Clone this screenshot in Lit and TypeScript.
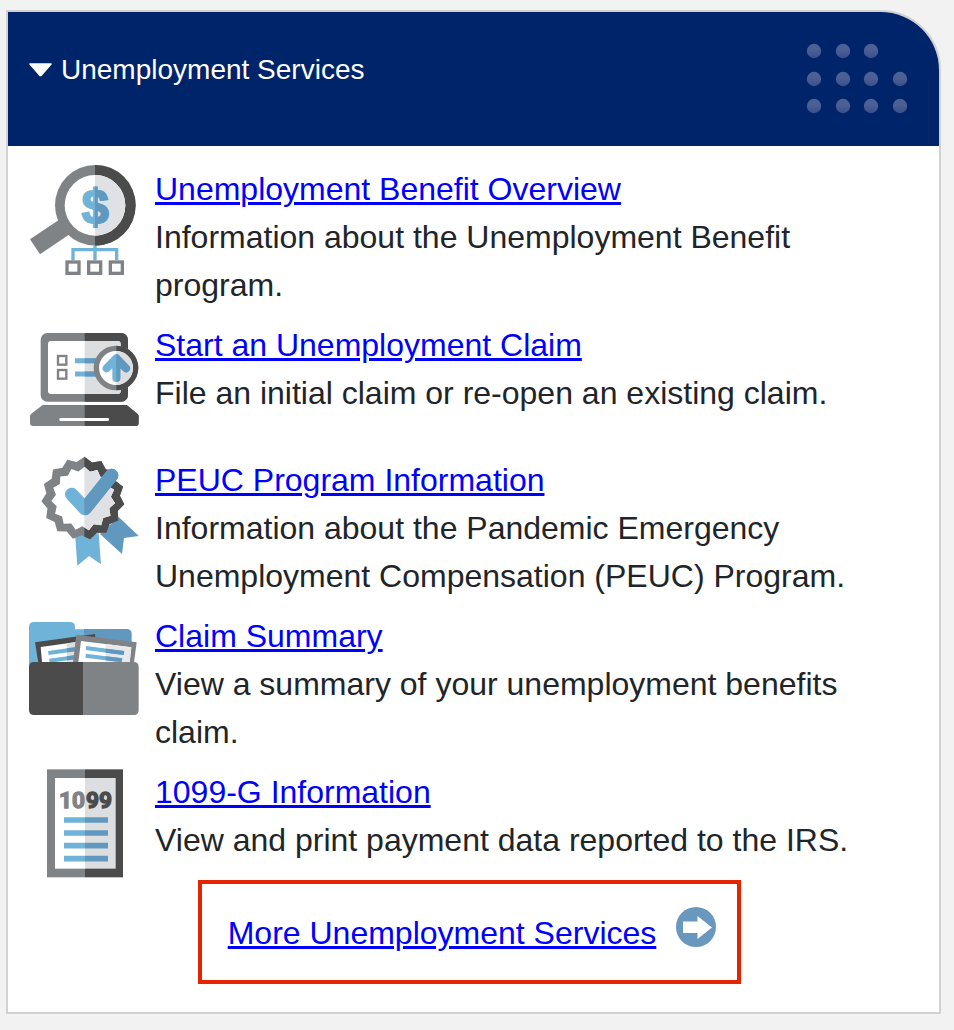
import { LitElement, html, css, svg, nothing } from "lit";
import { customElement, property, state } from "lit/decorators.js";

const star = (cx: number, cy: number, outer: number, inner: number, tips: number, start: number) =>
  Array.from({ length: tips * 2 }, (_, i) => {
    const r = i % 2 ? inner : outer;
    const a = ((start + (i * 180) / tips) * Math.PI) / 180;
    return `${(cx + r * Math.cos(a)).toFixed(1)},${(cy + r * Math.sin(a)).toFixed(1)}`;
  }).join(" ");

const icons: Record<string, { box: string; height: number; art: unknown }> = {
  overview: {
    box: "27 30 330 330",
    height: 110,
    art: svg`
      <defs><clipPath id="right"><rect x="225" y="20" width="140" height="350"/></clipPath></defs>
      <path d="M30 253L122 191L150 237L60 298Z" fill="#808386"/>
      <circle cx="226" cy="151" r="121" fill="#808386"/>
      <circle cx="226" cy="151" r="121" fill="#4b4b4b" clip-path="url(#right)"/>
      <circle cx="225" cy="151" r="91" fill="#fff"/>
      <circle cx="225" cy="151" r="91" fill="#dfe1e4" clip-path="url(#right)"/>
      <text x="225" y="204" class="dollar" fill="#70b3d8" stroke="#70b3d8">$</text>
      <text x="225" y="204" class="dollar" fill="#6098bf" stroke="#6098bf" clip-path="url(#right)">$</text>
      <path d="M159 316V284H290V316M225 272V316" fill="none" stroke="#70b3d8" stroke-width="10"/>
      <g fill="#fff" stroke="#808386" stroke-width="10">
        <rect x="141" y="321" width="36" height="34"/>
        <rect x="206" y="321" width="36" height="34"/>
        <rect x="271" y="321" width="36" height="34"/>
      </g>`,
  },
  claim: {
    box: "27 3 330 369",
    height: 123,
    art: svg`
      <defs>
        <clipPath id="right"><rect x="194" y="0" width="170" height="372"/></clipPath>
        <clipPath id="lens"><rect x="289" y="0" width="80" height="372"/></clipPath>
      </defs>
      <g fill="#808386">
        <rect x="62" y="39" width="262" height="206" rx="20"/>
        <path d="M68 255H320L353 282Q356 285 356 289V309Q356 318 347 318H39Q30 318 30 309V289Q30 285 33 282Z"/>
      </g>
      <g fill="#4b4b4b" clip-path="url(#right)">
        <rect x="62" y="39" width="262" height="206" rx="20"/>
        <path d="M68 255H320L353 282Q356 285 356 289V309Q356 318 347 318H39Q30 318 30 309V289Q30 285 33 282Z"/>
      </g>
      <rect x="84" y="63" width="218" height="159" rx="9" fill="#fff"/>
      <rect x="84" y="63" width="218" height="159" rx="9" fill="#dcdee0" clip-path="url(#right)"/>
      <rect x="118" y="294" width="149" height="9" rx="4" fill="#fff"/>
      <g fill="#fff" stroke="#808386" stroke-width="7">
        <rect x="114" y="108" width="25" height="26"/>
        <rect x="114" y="150" width="25" height="26"/>
      </g>
      <path d="M165 122H230M165 162H230" stroke="#70b3d8" stroke-width="15"/>
      <path d="M194 122H240M194 162H240" stroke="#6098bf" stroke-width="15"/>
      <circle cx="288" cy="144" r="67" fill="#808386"/>
      <circle cx="288" cy="144" r="67" fill="#4b4b4b" clip-path="url(#lens)"/>
      <circle cx="288" cy="144" r="51" fill="#fff"/>
      <circle cx="288" cy="144" r="51" fill="#dcdee0" clip-path="url(#lens)"/>
      <path d="M289 174V116M260 145L289 115L318 145" fill="#70b3d8" stroke="#70b3d8" stroke-width="24" stroke-linecap="round" stroke-linejoin="round"/>
      <path d="M289 174V116M260 145L289 115L318 145" fill="#6098bf" stroke="#6098bf" stroke-width="24" stroke-linecap="round" stroke-linejoin="round" clip-path="url(#lens)"/>`,
  },
  program: {
    box: "27 18 330 330",
    height: 110,
    art: svg`
      <defs><clipPath id="right"><rect x="193" y="0" width="170" height="360"/></clipPath></defs>
      <path d="M165 250H236L243 343L207 318L172 347Z" fill="#70b3d8"/>
      <path d="M240 252L296 201L356 258L312 264L306 312Z" fill="#6098bf"/>
      <polygon points=${star(189, 145, 125, 111, 15, -88)} fill="#808386"/>
      <polygon points=${star(189, 145, 125, 111, 15, -88)} fill="#4b4b4b" clip-path="url(#right)"/>
      <polygon points=${star(190, 146, 96, 83, 15, -88)} fill="#fff"/>
      <polygon points=${star(190, 146, 96, 83, 15, -88)} fill="#dfe1e4" clip-path="url(#right)"/>
      <path d="M155 133L195 176L275 76" fill="none" stroke="#70b3d8" stroke-width="40" stroke-linecap="round" stroke-linejoin="round"/>
      <path d="M155 133L195 176L275 76" fill="none" stroke="#6098bf" stroke-width="40" stroke-linecap="round" stroke-linejoin="round" clip-path="url(#right)"/>`,
  },
  summary: {
    box: "27 6 330 330",
    height: 110,
    art: svg`
      <path d="M27 165V51Q27 36 42 36H150Q165 36 165 51V58H192V165Z" fill="#70b3d8"/>
      <path d="M192 57H320Q335 57 335 72V165H192Z" fill="#6098bf"/>
      <path d="M45 97L225 72L232 165H56Z" fill="#4b4b4b"/>
      <path d="M62 111L170 96V165H67Z" fill="#fff"/>
      <path d="M141 100L168 96V165H141Z" fill="#dcdee0"/>
      <path d="M85 129L166 118M88 152L165 142" stroke="#70b3d8" stroke-width="12"/>
      <path d="M141 121L166 118M141 145L165 142" stroke="#6098bf" stroke-width="12"/>
      <path d="M169 74L350 97L341 165H158Z" fill="#808386"/>
      <path d="M183 93L334 112L328 165H174Z" fill="#fff"/>
      <path d="M257 102L334 112L328 165H257Z" fill="#e9e9ea"/>
      <path d="M198 114L312 129M197 137L306 151" stroke="#70b3d8" stroke-width="12"/>
      <path d="M257 122L312 129M257 145L306 151" stroke="#6098bf" stroke-width="12"/>
      <path d="M191 156V315H42Q27 315 27 300V171Q27 156 42 156Z" fill="#4b4b4b"/>
      <path d="M191 156H341Q356 156 356 171V300Q356 315 341 315H191Z" fill="#808386"/>`,
  },
  form: {
    box: "27 24 330 336",
    height: 112,
    art: svg`
      <rect x="81" y="28" width="115" height="324" fill="#808386"/>
      <rect x="195" y="28" width="114" height="324" fill="#4b4b4b"/>
      <rect x="105" y="54" width="91" height="272" fill="#fff"/>
      <rect x="195" y="54" width="92" height="272" fill="#dcdee0"/>
      <text x="195" y="145" class="digits" text-anchor="end" fill="#808386" stroke="#808386">10</text>
      <text x="198" y="145" class="digits" fill="#4b4b4b" stroke="#4b4b4b">99</text>
      <path d="M132 180H196M132 219H196M132 257H196M132 296H196" stroke="#70b3d8" stroke-width="17"/>
      <path d="M195 180H264M195 219H264M195 257H264M195 296H264" stroke="#6098bf" stroke-width="17"/>`,
  },
};

@customElement("service-item")
class ServiceItem extends LitElement {
  @property() icon = "";
  @property() label = "";
  @property() text = "";

  static styles = css`
    :host { display: grid; grid-template-columns: 110px 1fr; gap: 16px; align-items: start; }
    .icon { display: block; }
    .dollar { font: bold 144px "Liberation Sans", Arial, sans-serif; text-anchor: middle; stroke-width: 6px; }
    .digits { font: bold 68px Roboto, sans-serif; stroke-width: 4px; }
    .text { margin: 0; }
    .link { color: #00f; text-decoration-thickness: 3px; text-underline-offset: 2px; }
  `;

  render() {
    const icon = icons[this.icon];
    return html`
      <svg class="icon" width="110" height=${icon.height} viewBox=${icon.box} aria-hidden="true">${icon.art}</svg>
      <div>
        <a class="link" href="#">${this.label}</a>
        <p class="text">${this.text}</p>
      </div>`;
  }
}

@customElement("app-root")
class AppRoot extends LitElement {
  @state() open = true;

  services = [
    ["overview", "Unemployment Benefit Overview", "Information about the Unemployment Benefit program."],
    ["claim", "Start an Unemployment Claim", "File an initial claim or re-open an existing claim."],
    ["program", "PEUC Program Information", "Information about the Pandemic Emergency Unemployment Compensation (PEUC) Program."],
    ["summary", "Claim Summary", "View a summary of your unemployment benefits claim."],
    ["form", "1099-G Information", "View and print payment data reported to the IRS."],
  ];

  static styles = css`
    :host {
      display: block; box-sizing: border-box; min-height: 100vh; padding: 10px 13px 16px 6px;
      background: #f2f2f2; color: #212529; font: 32px/48px "Liberation Sans", Arial, sans-serif;
    }
    .card { border: 2px solid #d2d2d2; border-top-right-radius: 60px; background: #fff; overflow: hidden; }
    .header { display: flex; justify-content: space-between; align-items: flex-start; padding: 31px 31px 31px 21px; background: #002469; }
    .title { margin: 0; font-size: 28px; line-height: 40px; font-weight: normal; padding-top: 7px; }
    .toggle { display: flex; align-items: center; gap: 9px; padding: 0; border: 0; background: none; color: #fff; font: inherit; cursor: pointer; }
    .closed { transform: rotate(-90deg); }
    .body { padding: 19px 29px 28px 21px; }
    .list { display: grid; gap: 12px; margin: 0; padding: 0; list-style: none; }
    .more { display: flex; align-items: center; gap: 20px; width: fit-content; margin: 0 auto; padding: 23px 21px 21px 26px; border: 4px solid #e42500; }
    .link { color: #00f; text-decoration-thickness: 3px; text-underline-offset: 2px; }
  `;

  render() {
    const dots = [[8, 8], [37, 8], [65, 8], [8, 36], [37, 36], [65, 36], [94, 36], [8, 63], [37, 63], [65, 63], [94, 63]];
    return html`
      <section class="card">
        <header class="header">
          <h2 class="title">
            <button class="toggle" aria-expanded=${this.open} @click=${() => (this.open = !this.open)}>
              <svg class=${this.open ? "" : "closed"} width="23" height="14" viewBox="0 0 23 14" aria-hidden="true">
                <path d="M1 1H22L12 12.5H11Z" fill="#fff" stroke="#fff" stroke-width="1.6" stroke-linejoin="round"/>
              </svg>
              Unemployment Services
            </button>
          </h2>
          <svg width="102" height="72" viewBox="0 0 102 72" aria-hidden="true">
            <defs><linearGradient id="dot" x2="0" y2="1"><stop offset="0.4" stop-color="#4d6096"/><stop offset="1" stop-color="#3a4f8a"/></linearGradient></defs>
            ${dots.map(([x, y]) => svg`<circle cx=${x} cy=${y} r="7.2" fill="url(#dot)"/>`)}
          </svg>
        </header>
        ${this.open
          ? html`<div class="body">
              <ul class="list">
                ${this.services.map(([icon, label, text]) => html`<li><service-item .icon=${icon} .label=${label} .text=${text}></service-item></li>`)}
              </ul>
              <div class="more">
                <a class="link" href="#">More Unemployment Services</a>
                <svg width="40" height="52" viewBox="0 0 40 52" aria-hidden="true">
                  <circle cx="20" cy="20" r="20" fill="#6898bd"/>
                  <path d="M7 14.5H21.5V9L36 20.5L21.5 32V26H7Z" fill="#fff"/>
                </svg>
              </div>
            </div>`
          : nothing}
      </section>`;
  }
}
